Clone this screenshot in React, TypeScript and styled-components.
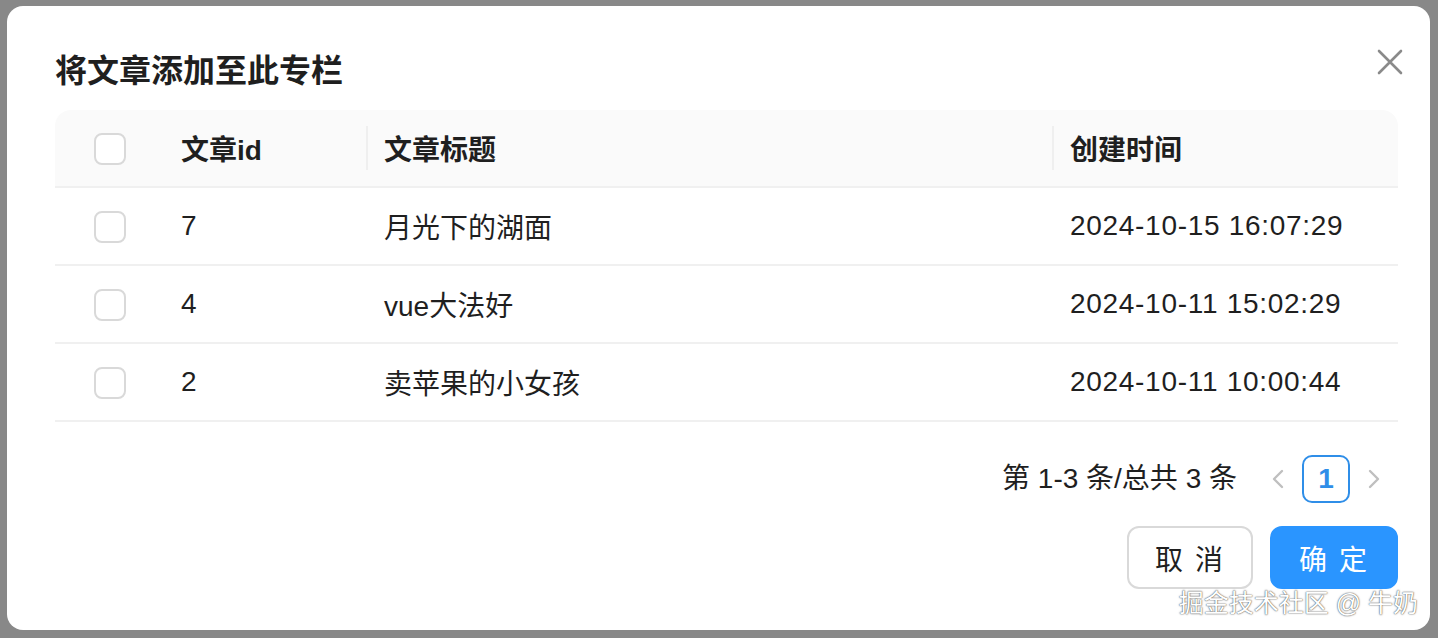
import React from 'react';
import styled, { createGlobalStyle } from 'styled-components';

interface Article {
  id: number;
  title: string;
  createdAt: string;
}

const articles: Article[] = [
  { id: 7, title: '月光下的湖面', createdAt: '2024-10-15 16:07:29' },
  { id: 4, title: 'vue大法好', createdAt: '2024-10-11 15:02:29' },
  { id: 2, title: '卖苹果的小女孩', createdAt: '2024-10-11 10:00:44' },
];

const FONT = `'Liberation Sans', 'Noto Sans CJK SC', sans-serif`;

const GlobalStyle = createGlobalStyle`
  html, body {
    margin: 0;
    padding: 0;
    overflow: hidden;
  }
  * {
    box-sizing: border-box;
  }
`;

const Checkbox = () => <StCheckbox aria-hidden="true" />;

const Chevron = ({ dir }: { dir: 'left' | 'right' }) => (
  <svg width="14" height="20" viewBox="0 0 14 20" fill="none">
    <polyline
      points={dir === 'left' ? '11,2 3,10 11,18' : '3,2 11,10 3,18'}
      stroke="#bfbfbf"
      strokeWidth="2.4"
      strokeLinecap="round"
      strokeLinejoin="round"
    />
  </svg>
);

const App = () => {
  return (
    <>
      <GlobalStyle />
      <StBackdrop>
        <StModal>
          <StCloseButton type="button" aria-label="close">
            <svg width="26" height="26" viewBox="0 0 26 26">
              <path
                d="M2 2 L24 24 M24 2 L2 24"
                stroke="#8a8a8a"
                strokeWidth="2.6"
                strokeLinecap="round"
              />
            </svg>
          </StCloseButton>
          <StTitle>将文章添加至此专栏</StTitle>

          <StTable>
            <colgroup>
              <col style={{ width: 110 }} />
              <col style={{ width: 203 }} />
              <col style={{ width: 686 }} />
              <col style={{ width: 344 }} />
            </colgroup>
            <thead>
              <tr>
                <StHeadCell $center>
                  <Checkbox />
                </StHeadCell>
                <StHeadCell $divider>文章id</StHeadCell>
                <StHeadCell $divider>文章标题</StHeadCell>
                <StHeadCell>创建时间</StHeadCell>
              </tr>
            </thead>
            <tbody>
              {articles.map((article) => (
                <tr key={article.id}>
                  <StBodyCell $center>
                    <Checkbox />
                  </StBodyCell>
                  <StBodyCell>{article.id}</StBodyCell>
                  <StBodyCell>{article.title}</StBodyCell>
                  <StBodyCell $tracking>{article.createdAt}</StBodyCell>
                </tr>
              ))}
            </tbody>
          </StTable>

          <StPagination>
            <StTotal>第 1-3 条/总共 3 条</StTotal>
            <StPageArrow type="button" disabled>
              <Chevron dir="left" />
            </StPageArrow>
            <StPageItem type="button">1</StPageItem>
            <StPageArrow type="button" disabled>
              <Chevron dir="right" />
            </StPageArrow>
          </StPagination>

          <StFooter>
            <StButton type="button">取 消</StButton>
            <StButton type="button" $primary>
              确 定
            </StButton>
          </StFooter>
        </StModal>
        <StWatermark>掘金技术社区 @ 牛奶</StWatermark>
      </StBackdrop>
    </>
  );
};

export default App;

const StBackdrop = styled.div`
  position: relative;

  width: 1438px;
  height: 638px;
  padding: 6px 8px 0 7px;

  background-color: #888888;
  font-family: ${FONT};
`;

const StModal = styled.div`
  position: relative;

  display: flex;
  flex-direction: column;

  width: 1423px;
  padding: 40px 32px 41px 48px;

  border-radius: 16px;
  background-color: #ffffff;
`;

const StCloseButton = styled.button`
  position: absolute;
  top: 43px;
  right: 27px;

  display: flex;
  justify-content: center;
  align-items: center;

  width: 26px;
  height: 26px;
  padding: 0;

  border: none;
  background: transparent;
`;

const StTitle = styled.h2`
  margin: 0 0 16px;

  color: #1f1f1f;
  font-family: ${FONT};
  font-size: 32px;
  font-weight: 600;
  line-height: 48px;
  transform: translateY(1px);
`;

const StTable = styled.table`
  width: 1343px;

  border-collapse: separate;
  border-spacing: 0;
  table-layout: fixed;
`;

const StHeadCell = styled.th<{ $center?: boolean; $divider?: boolean }>`
  position: relative;

  height: 78px;
  padding: 0 16px;

  border-bottom: 2px solid #f0f0f0;
  background-color: #fafafa;
  color: #1f1f1f;
  font-size: 28px;
  font-weight: 600;
  text-align: ${({ $center }) => ($center ? 'center' : 'left')};
  vertical-align: middle;

  &:first-child {
    border-top-left-radius: 16px;
  }
  &:last-child {
    border-top-right-radius: 16px;
  }

  ${({ $divider }) =>
    $divider &&
    `
    &::after {
      content: '';
      position: absolute;
      top: 50%;
      right: 0;
      width: 2px;
      height: 44px;
      transform: translateY(-50%);
      background-color: #efefef;
    }
  `}

  & > span {
    vertical-align: middle;
  }
`;

const StBodyCell = styled.td<{ $center?: boolean; $tracking?: boolean }>`
  height: 78px;
  padding: 0 16px;

  border-bottom: 2px solid #f0f0f0;
  color: #1f1f1f;
  font-size: 28px;
  letter-spacing: ${({ $tracking }) => ($tracking ? '0.7px' : 'normal')};
  text-align: ${({ $center }) => ($center ? 'center' : 'left')};
  vertical-align: middle;

  & > span {
    vertical-align: middle;
  }
`;

const StCheckbox = styled.span`
  display: inline-block;

  width: 32px;
  height: 32px;

  border: 2px solid #d9d9d9;
  border-radius: 8px;
  background-color: #ffffff;
`;

const StPagination = styled.div`
  display: flex;
  justify-content: flex-end;
  align-items: center;

  margin-top: 33px;
`;

const StTotal = styled.span`
  margin-right: 17px;

  color: #1f1f1f;
  font-size: 28px;
  line-height: 48px;
`;

const StPageArrow = styled.button`
  display: flex;
  justify-content: center;
  align-items: center;

  width: 48px;
  height: 48px;
  padding: 0;

  border: none;
  background: transparent;
`;

const StPageItem = styled.button`
  display: flex;
  justify-content: center;
  align-items: center;

  width: 48px;
  height: 48px;
  padding: 0;

  border: 2px solid #2f8ee8;
  border-radius: 10px;
  background-color: #ffffff;
  color: #2f8ee8;
  font-family: ${FONT};
  font-size: 28px;
  font-weight: 600;
`;

const StFooter = styled.div`
  display: flex;
  justify-content: flex-end;
  gap: 17px;

  margin-top: 23px;
`;

const StButton = styled.button<{ $primary?: boolean }>`
  display: flex;
  justify-content: center;
  align-items: center;

  width: ${({ $primary }) => ($primary ? '128px' : '126px')};
  height: 63px;
  padding: 0;

  border: 2px solid ${({ $primary }) => ($primary ? '#2a95ff' : '#d9d9d9')};
  border-radius: 12px;
  background-color: ${({ $primary }) => ($primary ? '#2a95ff' : '#ffffff')};
  color: ${({ $primary }) => ($primary ? '#ffffff' : '#1f1f1f')};
  font-family: ${FONT};
  font-size: 28px;
  letter-spacing: 2px;
`;

const StWatermark = styled.div`
  position: absolute;
  top: 587px;
  right: 20px;

  color: #ffffff;
  font-family: ${FONT};
  font-size: 25px;
  line-height: 32px;
  text-shadow:
    0 0 1px rgba(0, 0, 0, 0.7),
    0 0 2px rgba(0, 0, 0, 0.5);
`;
